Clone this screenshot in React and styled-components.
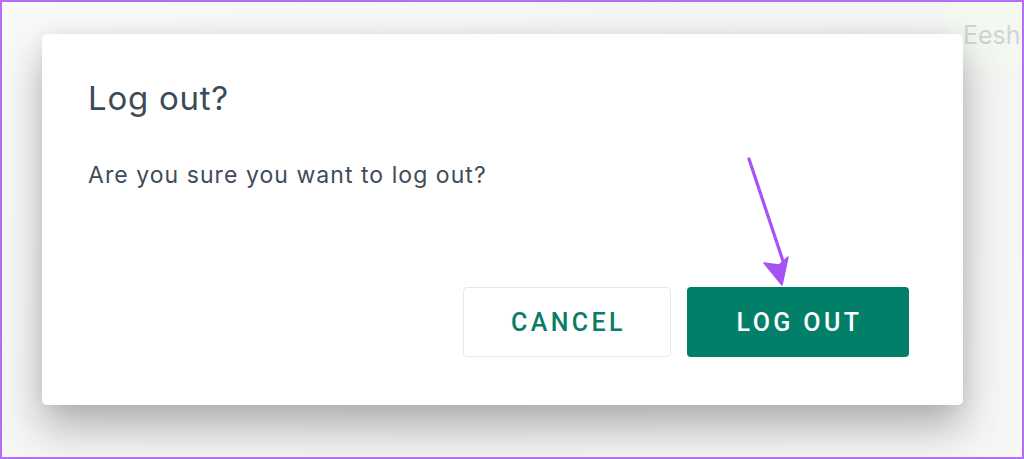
import React from 'react';
import styled, { createGlobalStyle } from 'styled-components';

const GlobalStyle = createGlobalStyle`
  html, body {
    margin: 0;
    padding: 0;
  }
  body {
    font-family: Inter, "Liberation Sans", sans-serif;
    background: #f6f6f4;
  }
  * {
    box-sizing: border-box;
  }
`;

const Page = styled.div`
  position: relative;
  width: 1024px;
  height: 459px;
  overflow: hidden;
  border: 2px solid #b46df6;
  background: linear-gradient(135deg, #f9f9f8 0%, #f4f4f2 60%, #f7f7f5 100%);
`;

const TopBar = styled.div`
  display: flex;
  justify-content: flex-end;
`;

const UserChip = styled.div`
  width: 76px;
  height: 64px;
  padding: 18px 0 0 17px;
  background: #f3f8f1;
  color: #d2d4d3;
  font-size: 25px;
  white-space: nowrap;
`;

const Overlay = styled.div`
  position: absolute;
  inset: 0;
  padding: 32px 0 0 40px;
`;

const Dialog = styled.div`
  position: relative;
  width: 921px;
  height: 371px;
  padding: 44px 54px 48px 46px;
  display: flex;
  flex-direction: column;
  background: #ffffff;
  border-radius: 5px;
  box-shadow: 0 22px 40px rgba(60, 64, 64, 0.38), 0 0 18px rgba(0, 0, 0, 0.06);
`;

const Title = styled.h2`
  margin: 0;
  font-size: 33px;
  font-weight: 400;
  line-height: 40px;
  letter-spacing: 0.75px;
  color: #3d4a57;
`;

const Message = styled.p`
  margin: 43px 0 0;
  font-size: 23px;
  line-height: 28px;
  letter-spacing: 1.05px;
  color: #3f4c59;
`;

const Actions = styled.div`
  margin-top: auto;
  display: flex;
  justify-content: flex-end;
  gap: 16px;
`;

const Button = styled.button`
  width: ${(p) => (p.$primary ? '222px' : '208px')};
  height: 70px;
  border-radius: 4px;
  border: ${(p) => (p.$primary ? 'none' : '1.5px solid #e6e8eb')};
  background: ${(p) => (p.$primary ? '#017f68' : '#ffffff')};
  color: ${(p) => (p.$primary ? '#ffffff' : '#0a7d66')};
  font-family: Roboto, Inter, sans-serif;
  font-size: 25px;
  font-weight: 500;
  letter-spacing: 3.4px;
  padding: 0 0 0 3px;
  cursor: pointer;
`;

const Pointer = styled.svg`
  position: absolute;
  left: 700px;
  top: 118px;
  overflow: visible;
  pointer-events: none;
`;

const ArrowMark = () => (
  <Pointer width="100" height="140" viewBox="0 0 100 140">
    <path d="M7 7 L42 112" stroke="#a652f5" strokeWidth="3.2" strokeLinecap="round" />
    <path d="M22 111 L40 133 L46 105 L37 113 Z" fill="#a652f5" stroke="#a652f5" strokeWidth="1.5" strokeLinejoin="round" />
  </Pointer>
);

export default function App() {
  return (
    <>
      <GlobalStyle />
      <Page>
        <TopBar>
          <UserChip>Eesh</UserChip>
        </TopBar>
        <Overlay>
          <Dialog>
            <Title>Log out?</Title>
            <Message>Are you sure you want to log out?</Message>
            <Actions>
              <Button>CANCEL</Button>
              <Button $primary>LOG OUT</Button>
            </Actions>
            <ArrowMark />
          </Dialog>
        </Overlay>
      </Page>
    </>
  );
}
